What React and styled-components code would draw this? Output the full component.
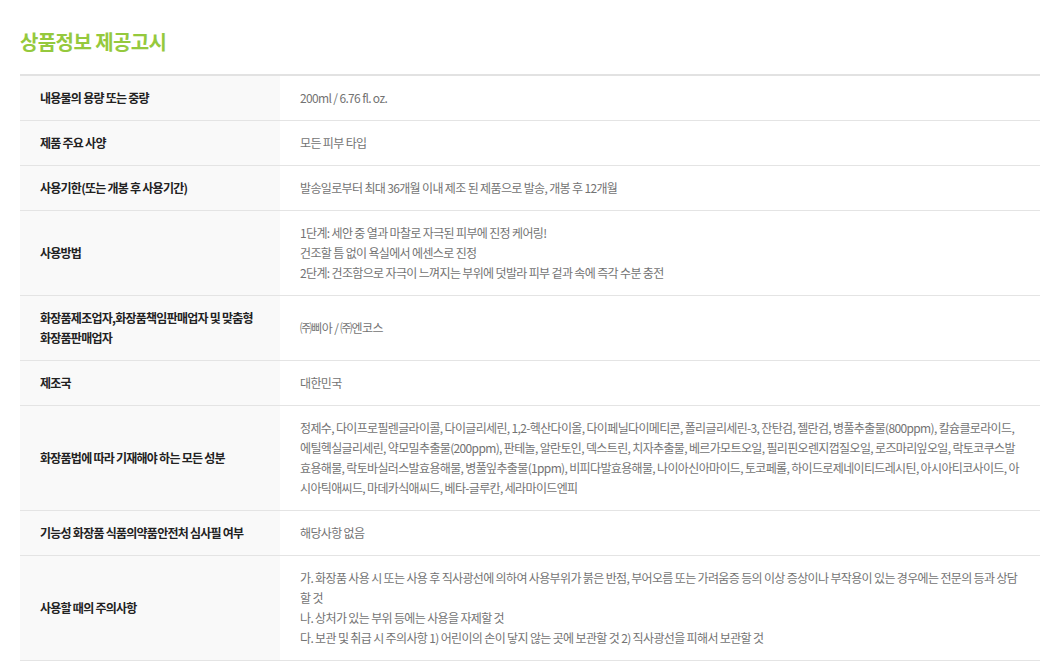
import React from "react";
import styled, { createGlobalStyle } from "styled-components";

const Global = createGlobalStyle`
  html, body { margin: 0; padding: 0; background: #fff; }
  body { font-family: "Noto Sans CJK KR", "Noto Sans", sans-serif; }
`;

const Page = styled.div`
  width: 1020px;
  padding: 30px 10px 0 20px;
`;

const Title = styled.h2`
  margin: 0 0 20px;
  font-size: 20px;
  line-height: 24px;
  font-weight: 700;
  letter-spacing: -0.6px;
  color: #95c93d;
`;

const Table = styled.table`
  width: 100%;
  border-collapse: collapse;
  border-top: 2px solid #e2e2e2;
  table-layout: fixed;
`;

const Row = styled.tr`
  border-bottom: 1px solid #e4e4e4;
`;

const Label = styled.th`
  width: 260px;
  box-sizing: border-box;
  padding: 12px 20px;
  background: #f9f9f9;
  text-align: left;
  vertical-align: middle;
  font-size: 12px;
  line-height: 20px;
  font-weight: 700;
  letter-spacing: -0.75px;
  color: #222;
`;

const Value = styled.td`
  padding: 12px 20px;
  vertical-align: middle;
  font-size: 12px;
  line-height: 20px;
  font-weight: 400;
  letter-spacing: -0.65px;
  color: #737373;
`;

const Line = styled.div``;

const rows = [
  ["내용물의 용량 또는 중량", ["200ml / 6.76 fl. oz."]],
  ["제품 주요 사양", ["모든 피부 타입"]],
  ["사용기한(또는 개봉 후 사용기간)", ["발송일로부터 최대 36개월 이내 제조 된 제품으로 발송, 개봉 후 12개월"]],
  [
    "사용방법",
    [
      "1단계: 세안 중 열과 마찰로 자극된 피부에 진정 케어링!",
      "건조할 틈 없이 욕실에서 에센스로 진정",
      "2단계: 건조함으로 자극이 느껴지는 부위에 덧발라 피부 겉과 속에 즉각 수분 충전",
    ],
  ],
  ["화장품제조업자,화장품책임판매업자 및 맞춤형 화장품판매업자", ["㈜삐아 / ㈜엔코스"]],
  ["제조국", ["대한민국"]],
  [
    "화장품법에 따라 기재해야 하는 모든 성분",
    [
      "정제수, 다이프로필렌글라이콜, 다이글리세린, 1,2-헥산다이올, 다이페닐다이메티콘, 폴리글리세린-3, 잔탄검, 젤란검, 병풀추출물(800ppm), 칼슘클로라이드, 에틸헥실글리세린, 약모밀추출물(200ppm), 판테놀, 알란토인, 덱스트린, 치자추출물, 베르가모트오일, 필리핀오렌지껍질오일, 로즈마리잎오일, 락토코쿠스발효용해물, 락토바실러스발효용해물, 병풀잎추출물(1ppm), 비피다발효용해물, 나이아신아마이드, 토코페롤, 하이드로제네이티드레시틴, 아시아티코사이드, 아시아틱애씨드, 마데카식애씨드, 베타-글루칸, 세라마이드엔피",
    ],
  ],
  ["기능성 화장품 식품의약품안전처 심사필 여부", ["해당사항 없음"]],
  [
    "사용할 때의 주의사항",
    [
      "가. 화장품 사용 시 또는 사용 후 직사광선에 의하여 사용부위가 붉은 반점, 부어오름 또는 가려움증 등의 이상 증상이나 부작용이 있는 경우에는 전문의 등과 상담할 것",
      "나. 상처가 있는 부위 등에는 사용을 자제할 것",
      "다. 보관 및 취급 시 주의사항 1) 어린이의 손이 닿지 않는 곳에 보관할 것 2) 직사광선을 피해서 보관할 것",
    ],
  ],
];

export default function App() {
  return (
    <Page>
      <Global />
      <Title>상품정보 제공고시</Title>
      <Table>
        <tbody>
          {rows.map(([label, lines]) => (
            <Row key={label}>
              <Label>{label}</Label>
              <Value>
                {lines.map((l) => (
                  <Line key={l}>{l}</Line>
                ))}
              </Value>
            </Row>
          ))}
        </tbody>
      </Table>
    </Page>
  );
}
